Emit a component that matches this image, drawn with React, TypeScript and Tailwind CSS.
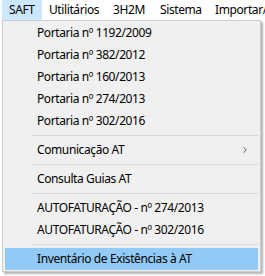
import React from 'react';
import { ChevronRight } from 'lucide-react';

const menus = [
  { name: "SAFT", w: "w-[40px]" },
  { name: "Utilitários", w: "w-[64px]" },
  { name: "3H2M", w: "w-[47px]" },
  { name: "Sistema", w: "w-[55px]" },
  { name: "Importar/Exportar", w: "w-[120px]" },
];

type Item = { label?: string; sub?: boolean; active?: boolean; sep?: boolean };

const items: Item[] = [
  { label: "Portaria nº 1192/2009" },
  { label: "Portaria nº 382/2012" },
  { label: "Portaria nº 160/2013" },
  { label: "Portaria nº 274/2013" },
  { label: "Portaria nº 302/2016" },
  { sep: true },
  { label: "Comunicação AT", sub: true },
  { sep: true },
  { label: "Consulta Guias AT" },
  { sep: true },
  { label: "AUTOFATURAÇÃO - nº 274/2013" },
  { label: "AUTOFATURAÇÃO - nº 302/2016" },
  { sep: true },
  { label: "Inventário de Existências à AT", active: true },
];

export default function App() {
  return (
    <div className="w-[265px] h-[276px] bg-white overflow-hidden text-[12px] tracking-[-0.4px] text-black font-['Noto_Sans',sans-serif]">
      {/* menu bar */}
      <div className="flex h-[20px] pl-[2px] whitespace-nowrap">
        {menus.map((m, i) => (
          <div
            key={i}
            className={`shrink-0 ${m.w} flex items-center pl-[6px] border ${i === 0 ? 'bg-[#cce8ff] border-[#cce8ff]' : 'border-transparent'}`}
          >
            {m.name}
          </div>
        ))}
      </div>

      {/* dropdown */}
      <div className="ml-[2px] w-[259px] bg-[#f0f0f0] border border-[#cccccc] px-[2px] py-[1px] shadow-[2px_2px_2px_rgba(0,0,0,0.3)]">
        {items.map((it, i) =>
          it.sep ? (
            <div key={i} className="h-[7px] flex items-center pl-[27px]">
              <div className="h-px w-full bg-[#d7d7d7]" />
            </div>
          ) : (
            <div
              key={i}
              className={`h-[22px] flex items-center justify-between pl-[32px] pr-[8px] ${it.active ? 'bg-[#91c9f7]' : ''}`}
            >
              <span>{it.label}</span>
              {it.sub && <ChevronRight className="w-[10px] h-[10px]" strokeWidth={1.5} />}
            </div>
          )
        )}
      </div>
    </div>
  );
}
